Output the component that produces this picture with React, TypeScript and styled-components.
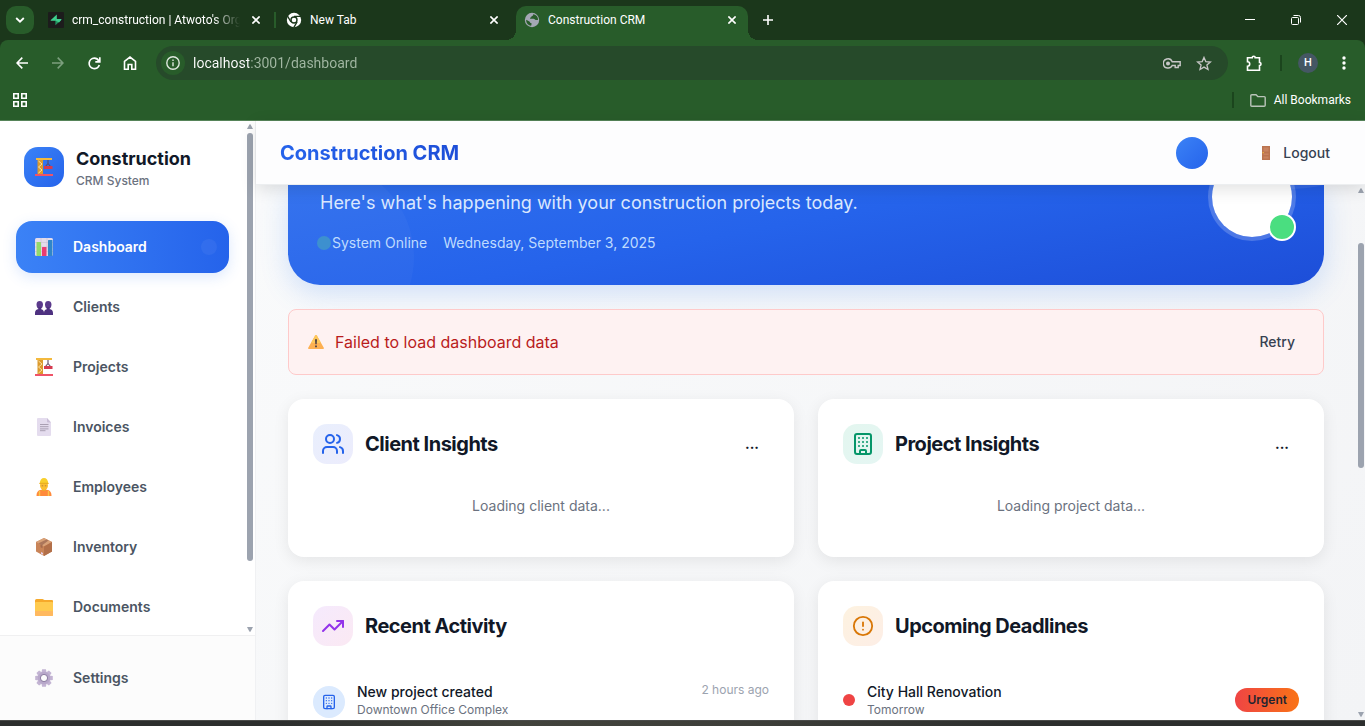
import React from 'react';
import styled, { createGlobalStyle, css } from 'styled-components';
import { Building, CircleAlert, TrendingUp, Users } from 'lucide-react';

const uiFont = `'Inter', 'Liberation Sans', sans-serif`;
const chromeFont = `Roboto, 'Noto Sans', sans-serif`;

const GlobalStyle = createGlobalStyle`
  * { box-sizing: border-box; }
  body { margin: 0; font-family: ${uiFont}; overflow: hidden; }
  button { border: 0; padding: 0; background: none; font: inherit; color: inherit; cursor: pointer; }
  a { color: inherit; text-decoration: none; }
  h1, h2, p, ul { margin: 0; padding: 0; }
  ul { list-style: none; }
  svg { display: block; flex-shrink: 0; }
`;

/* ---------- browser window ---------- */

const Window = styled.div`
  display: flex;
  flex-direction: column;
  height: 100vh;
  background: #fff;
`;

const TabStrip = styled.div`
  display: flex;
  align-items: center;
  height: 40px;
  padding-left: 6px;
  background: #1b371b;
  color: #fff;
  font: 12px/16px ${chromeFont};
`;

const TabSearch = styled.button`
  display: grid;
  place-items: center;
  width: 28px;
  height: 28px;
  margin-right: 6px;
  border-radius: 10px;
  background: #285c2a;
`;

const Tabs = styled.div`
  display: flex;
  align-self: stretch;
  align-items: flex-end;
`;

const Tab = styled.div<{ $active?: boolean }>`
  position: relative;
  display: flex;
  align-items: center;
  gap: 8px;
  width: 232px;
  height: 34px;
  padding: 0 8px 6px;
  border-radius: 10px 10px 0 0;
  ${p =>
    p.$active &&
    css`
      margin-left: 6px;
      background: #285c2a;
      &::before,
      &::after {
        content: '';
        position: absolute;
        bottom: 0;
        width: 10px;
        height: 10px;
      }
      &::before {
        left: -10px;
        background: radial-gradient(circle at 0 0, transparent 10px, #285c2a 10px);
      }
      &::after {
        right: -10px;
        background: radial-gradient(circle at 100% 0, transparent 10px, #285c2a 10px);
      }
    `}
`;

const TabTitle = styled.span<{ $fade?: boolean }>`
  flex: 1;
  min-width: 0;
  overflow: hidden;
  white-space: nowrap;
  ${p => p.$fade && css`mask-image: linear-gradient(to right, #000 84%, transparent);`}
`;

const TabDivider = styled.span`
  width: 2px;
  height: 16px;
  margin: 0 2px 12px;
  background: #285c2a;
`;

const SmallButton = styled.button`
  display: grid;
  place-items: center;
  width: 16px;
  height: 16px;
`;

const NewTabButton = styled(SmallButton)`
  margin-left: 12px;
`;

const WindowControls = styled.div`
  display: flex;
  align-self: stretch;
  margin-left: auto;
`;

const WindowButton = styled.button`
  display: grid;
  place-items: center;
  width: 46px;
`;

const ToolbarArea = styled.div`
  background: #1b371b;
`;

const Toolbar = styled.div`
  display: flex;
  align-items: center;
  height: 46px;
  padding: 0 3px 0 4px;
  border-radius: 8px 8px 0 0;
  background: #285c2a;
  color: #fff;
`;

const ToolButton = styled.button`
  display: grid;
  place-items: center;
  width: 36px;
  height: 34px;
`;

const AddressBar = styled.div`
  display: flex;
  flex: 1;
  align-items: center;
  height: 34px;
  margin: 0 8px;
  padding: 0 8px 0 5px;
  border-radius: 17px;
  background: #264a2a;
  color: #c7c7c7;
`;

const SiteInfo = styled.button`
  display: grid;
  place-items: center;
  width: 24px;
  height: 24px;
  border-radius: 50%;
  background: #285c2a;
`;

const AddressInput = styled.input`
  flex: 1;
  min-width: 0;
  margin-left: 8px;
  padding: 0;
  border: 0;
  outline: 0;
  font: 14px/20px ${chromeFont};
  color: transparent;
  background: linear-gradient(to right, #fff 56px, #a3b8a4 56px);
  background-clip: text;
  -webkit-background-clip: text;
`;

const AddressButton = styled.button`
  display: grid;
  place-items: center;
  width: 32px;
  height: 24px;
`;

const BarDivider = styled.span<{ $space: number }>`
  width: 2px;
  height: 16px;
  margin: 0 ${p => p.$space}px 0 8px;
  background: #1b451d;
`;

const ProfileButton = styled.button`
  width: 20px;
  height: 20px;
  margin-right: 8px;
  border-radius: 50%;
  background: #455764;
  font: 500 11px/20px Roboto, sans-serif;
`;

const BookmarksBar = styled.div`
  display: flex;
  align-items: center;
  height: 35px;
  padding: 0 14px 6px 12px;
  border-bottom: 1px solid #568459;
  background: #285c2a;
  color: #fff;
  font: 12px/16px ${chromeFont};
`;

const BookmarksLink = styled.button`
  display: flex;
  align-items: center;
  gap: 8px;
`;

const Spacer = styled.span`
  flex: 1;
`;

const Taskbar = styled.div`
  height: 6px;
  border-top: 1px solid #4a4b49;
  background: linear-gradient(to right, #2c2e2d 20%, #42433c 38%, #3d3e39 55%, #2c2e2d 75%);
`;

/* ---------- application ---------- */

const AppShell = styled.div`
  display: flex;
  flex: 1;
  min-height: 0;
`;

const Sidebar = styled.aside`
  display: flex;
  flex-direction: column;
  width: 256px;
  flex-shrink: 0;
  border-right: 1px solid #f0f1f3;
  background: #fff;
`;

const SidebarScroll = styled.div`
  display: flex;
  flex: 1;
  min-height: 0;
  overflow: hidden;
`;

const SidebarBody = styled.div`
  flex: 1;
`;

const Brand = styled.div`
  display: flex;
  align-items: center;
  gap: 12px;
  padding: 24px;
`;

const BrandMark = styled.span`
  display: grid;
  place-items: center;
  width: 40px;
  height: 40px;
  border-radius: 14px;
  background: linear-gradient(135deg, #3b82f6, #2563eb);
`;

const BrandName = styled.p`
  font-size: 18px;
  line-height: 28px;
  font-weight: 700;
  color: #111827;
`;

const BrandSub = styled.p`
  font-size: 12px;
  line-height: 16px;
  font-weight: 500;
  color: #6b7280;
`;

const NavList = styled.ul`
  display: flex;
  flex-direction: column;
  gap: 8px;
  padding: 8px 16px;
`;

const NavLink = styled.a<{ $active?: boolean }>`
  display: flex;
  align-items: center;
  gap: 17px;
  height: 52px;
  padding: 0 12px 0 16px;
  border-radius: 16px;
  font-size: 14px;
  line-height: 20px;
  font-weight: 600;
  color: ${p => (p.$active ? '#fff' : '#4b5563')};
  ${p =>
    p.$active &&
    css`
      background: linear-gradient(to right, #3b82f6, #2563eb);
      box-shadow: 0 4px 14px rgba(59, 130, 246, 0.18);
    `}
`;

const NavIcon = styled.span`
  display: grid;
  place-items: center;
  width: 24px;
  height: 24px;
`;

const ActivePulse = styled.span`
  width: 16px;
  height: 16px;
  margin-left: auto;
  border-radius: 50%;
  background: rgba(255, 255, 255, 0.05);
`;

const SidebarFooter = styled.div`
  height: 85px;
  padding: 16px 26px 0 16px;
  border-top: 1px solid #f0f0f1;
  background: #fcfcfc;
`;

const ScrollColumn = styled.div<{ $width: number; $lead: number; $size: number }>`
  display: flex;
  flex-direction: column;
  align-items: center;
  flex-shrink: 0;
  width: ${p => p.$width}px;
  padding: 3px 0;
  color: #9ca3af;
  &::before {
    content: '';
    order: 1;
    width: 6px;
    height: ${p => p.$size}px;
    margin-top: ${p => p.$lead}px;
    border-radius: 3px;
    background: #9ca3af;
  }
  svg:last-child {
    order: 2;
    margin-top: auto;
  }
`;

const Main = styled.div`
  display: flex;
  flex: 1;
  flex-direction: column;
  min-width: 0;
`;

const TopBar = styled.header`
  position: relative;
  z-index: 1;
  display: flex;
  align-items: center;
  height: 64px;
  padding: 0 35px 0 24px;
  border-bottom: 1px solid #eceef0;
  background: #fdfdfe;
  box-shadow: 0 4px 16px rgba(0, 0, 0, 0.12);
`;

const AppTitle = styled.h1`
  margin-right: auto;
  font-size: 20px;
  line-height: 28px;
  font-weight: 700;
  color: transparent;
  background: linear-gradient(to right, #2563eb, #1d4ed8);
  background-clip: text;
  -webkit-background-clip: text;
`;

const UserDot = styled.button`
  width: 32px;
  height: 32px;
  margin-right: 50px;
  border-radius: 50%;
  background: linear-gradient(135deg, #3b82f6, #2563eb);
`;

const LogoutButton = styled.button`
  display: flex;
  align-items: center;
  gap: 9px;
  font-size: 14px;
  line-height: 20px;
  font-weight: 500;
  color: #374151;
`;

const ScrollArea = styled.div`
  display: flex;
  flex: 1;
  min-height: 0;
  overflow: hidden;
  background: linear-gradient(135deg, #f9fafb, #f3f4f6);
`;

const Content = styled.main`
  display: flex;
  flex: 1;
  flex-direction: column;
  gap: 24px;
  min-width: 0;
  padding: 0 33px 0 32px;
`;

const Hero = styled.section`
  position: relative;
  display: flex;
  flex-shrink: 0;
  justify-content: space-between;
  height: 100px;
  border-radius: 0 0 32px 32px;
  background: linear-gradient(170deg, #2f6fee, #2563eb 45%, #1d4ed8);
  box-shadow: 0 8px 28px rgba(59, 130, 246, 0.22);
`;

const HeroShapes = styled.div`
  position: absolute;
  inset: 0;
  overflow: hidden;
  border-radius: inherit;
  &::before,
  &::after {
    content: '';
    position: absolute;
    border-radius: 50%;
    background: rgba(255, 255, 255, 0.03);
  }
  &::before {
    left: -66px;
    bottom: -68px;
    width: 192px;
    height: 192px;
  }
  &::after {
    right: -96px;
    bottom: 96px;
    width: 256px;
    height: 256px;
    background: rgba(255, 255, 255, 0.08);
  }
`;

const HeroText = styled.div`
  position: relative;
  padding: 4px 32px 0;
`;

const HeroLead = styled.p`
  font-size: 18px;
  line-height: 28px;
  font-weight: 400;
  color: #dbe8fe;
`;

const HeroMeta = styled.div`
  display: flex;
  align-items: center;
  gap: 16px;
  margin-top: 16px;
  font-size: 14px;
  line-height: 20px;
  font-weight: 400;
  color: #bfdbfe;
`;

const Status = styled.span`
  position: relative;
  padding-left: 12px;
  &::before {
    content: '';
    position: absolute;
    left: -3px;
    top: 3px;
    width: 14px;
    height: 14px;
    border-radius: 50%;
    background: #3d90cf;
  }
`;

const Avatar = styled.div`
  position: relative;
  width: 88px;
  height: 88px;
  margin: -32px 28px 0 0;
  border: 4px solid rgba(255, 255, 255, 0.2);
  border-radius: 50%;
  background: #fff;
  background-clip: padding-box;
  &::after {
    content: '';
    position: absolute;
    right: -4px;
    bottom: -4px;
    width: 24px;
    height: 24px;
    border: 2px solid #fff;
    border-radius: 50%;
    background: #4ade80;
    transform: translateX(0);
  }
`;

const ErrorBanner = styled.section`
  position: relative;
  display: flex;
  flex-shrink: 0;
  align-items: center;
  gap: 11px;
  height: 66px;
  padding: 0 28px 0 19px;
  border: 1px solid #fecaca;
  border-radius: 8px;
  background: #fef2f2;
`;

const ErrorText = styled.p`
  flex: 1;
  font-size: 16px;
  line-height: 24px;
  color: #b91c1c;
`;

const RetryButton = styled.button`
  font-size: 14px;
  line-height: 20px;
  font-weight: 500;
  color: #374151;
`;

const CardGrid = styled.div`
  display: grid;
  grid-template-columns: 1fr 1fr;
  gap: 24px;
`;

const Card = styled.section`
  min-height: 158px;
  padding: 25px;
  border-radius: 16px;
  background: #fff;
  box-shadow: 0 4px 16px rgba(0, 0, 0, 0.08);
`;

const CardHeader = styled.div`
  display: flex;
  align-items: center;
  gap: 12px;
`;

const CardIcon = styled.span<{ $from: string; $to: string; $color: string }>`
  display: grid;
  place-items: center;
  width: 40px;
  height: 40px;
  border-radius: 14px;
  background: linear-gradient(135deg, ${p => p.$from}, ${p => p.$to});
  color: ${p => p.$color};
`;

const CardTitle = styled.h2`
  flex: 1;
  font-size: 20px;
  line-height: 28px;
  font-weight: 700;
  letter-spacing: -0.025em;
  color: #111827;
`;

const MoreButton = styled.button`
  padding: 6px 10px;
  font-size: 14px;
  line-height: 20px;
  font-weight: 700;
  color: #111827;
`;

const Loading = styled.p`
  padding: 32px 0 16px;
  font-size: 14px;
  line-height: 20px;
  text-align: center;
  color: #6b7280;
`;

const Entry = styled.div`
  display: flex;
  align-items: center;
  gap: 12px;
  margin-top: 36px;
`;

const EntryIcon = styled.span`
  display: grid;
  place-items: center;
  align-self: flex-end;
  width: 32px;
  height: 32px;
  border-radius: 50%;
  background: #dbeafe;
  color: #2563eb;
`;

const EntryText = styled.div`
  flex: 1;
`;

const EntryTitle = styled.p`
  font-size: 14px;
  line-height: 20px;
  font-weight: 500;
  color: #111827;
`;

const EntryNote = styled.p`
  font-size: 12px;
  line-height: 16px;
  color: #6b7280;
`;

const EntryTime = styled.time`
  align-self: flex-start;
  font-size: 12px;
  line-height: 16px;
  color: #9ca3af;
`;

const DueDot = styled.span`
  width: 12px;
  height: 12px;
  border-radius: 50%;
  background: #ef4444;
`;

const Badge = styled.span`
  padding: 4px 12px;
  border-radius: 12px;
  background: linear-gradient(to right, #ef4444, #f97316);
  font-size: 12px;
  line-height: 16px;
  font-weight: 600;
  color: #1f2430;
`;

/* ---------- drawings ---------- */

const CloseGlyph = () => (
  <svg width="8" height="8" viewBox="0 0 8 8" stroke="currentColor" strokeWidth="1.6">
    <path d="M.4.4l7.200 7.200M7.600.4L.4 7.600" />
  </svg>
);

const SupabaseIcon = () => (
  <svg width="16" height="16" viewBox="0 0 16 16">
    <rect width="16" height="16" rx="1" fill="#1c1c1c" />
    <path d="M8.8 2.6v6.2H3.2c-.5 0-.7-.5-.4-.9z" fill="#3ecf8e" />
    <path d="M7.4 13.2V7h5.4c.5 0 .7.5.4.9z" fill="#249361" />
    <path d="M7.4 7h5.4c.5 0 .7.5.4.9L11 10.4 7.4 8.6z" fill="#3ecf8e" />
  </svg>
);

const ChromeIcon = () => (
  <svg width="16" height="16" viewBox="0 0 16 16">
    <circle cx="8" cy="8" r="7.2" fill="#fff" />
    <circle cx="8" cy="8" r="3" fill="none" stroke="#1b371b" strokeWidth="1.4" />
    <path d="M8 4.4h7M4.9 9.8L1.4 3.9M11.1 9.8l-3.4 5.8" stroke="#1b371b" strokeWidth="1.3" />
  </svg>
);

const GlobeIcon = () => (
  <svg width="16" height="16" viewBox="0 0 16 16">
    <circle cx="8" cy="8" r="7.200" fill="#a4a7b4" />
    <path
      d="M9.200 2c.4 1-.2 1.600-1.200 2-.8.3-.4 1.200-1.300 1.500-.9.200-.9 1-.2 1.300h3c1.100 0 1.300 1.200 2.300 1.200H14c.3-2.600-1.400-5.100-4.800-6zM2.200 7.800l3.200 1.600c1 .5.5 1.500 1.500 1.600.9.100.7 1 .5 1.700l-.3 1.100C4 13.300 2 11 2.200 7.800z"
      fill="#285c2a"
    />
  </svg>
);

const CraneEmoji = () => (
  <svg width="18" height="18" viewBox="0 0 18 18">
    <rect x="0" y="16" width="18" height="2" fill="#ef5368" />
    <rect x="2.500" y="1" width="5.500" height="15" fill="#dc9a2e" />
    <path d="M3.500 3l3.500 3-3.500 3 3.500 3-3.500 3" fill="none" stroke="#fbe3a0" />
    <rect x="1" y="0" width="16" height="2" fill="#f3b93d" />
    <path d="M13 2v4M10 9l3-3.500L16 9" fill="none" stroke="#5b4a68" strokeWidth="1.100" />
    <rect x="9" y="8" width="8.500" height="3" fill="#d63b50" />
  </svg>
);

const ChartEmoji = () => (
  <svg width="18" height="18" viewBox="0 0 18 18">
    <rect width="18" height="18" rx="1.500" fill="#e3dcea" />
    <path d="M0 4.500h18M0 9h18M0 13.500h18M6 0v18M12 0v18" stroke="#c9bfd4" strokeWidth=".6" />
    <rect x="1.500" y="4" width="4.500" height="14" rx=".5" fill="#93d96b" />
    <rect x="7" y="9" width="4.500" height="9" rx=".5" fill="#ea3b71" />
    <rect x="13" y="2" width="4.500" height="16" rx=".5" fill="#2f86c9" />
  </svg>
);

const PeopleEmoji = () => (
  <svg width="18" height="18" viewBox="0 -3 18 18" fill="#5b3a8c">
    <path d="M1.500 3.500C1.500 1 2.800 0 4.700 0s3.300 1 3.300 3.500S6.800 8 4.700 8 1.500 6 1.500 3.500zM10 3.500C10 1 11.300 0 13.200 0s3.300 1 3.300 3.500S15.300 8 13.200 8 10 6 10 3.500z" />
    <path d="M0 14v-2c0-2.500 1.500-4 4.600-4S9 9.500 9 12v2z" fill="#4e3180" />
    <path d="M9 14v-2c0-2.500 1.300-4 4.400-4S18 9.500 18 12v2z" fill="#4e3180" />
    <path d="M3.500 6h2.500v3H3.500zM12 6h2.500v3H12z" fill="#4e3180" />
  </svg>
);

const PageEmoji = () => (
  <svg width="14" height="18" viewBox="0 0 14 18">
    <path d="M0 1a1 1 0 011-1h9l4 4.500V17a1 1 0 01-1 1H1a1 1 0 01-1-1z" fill="#e4dcee" />
    <path d="M10 0l4 4.500h-3a1 1 0 01-1-1z" fill="#c9bdd6" />
    <path d="M3 6.500h8.500M3 8.700h8.500M3 10.900h8.500M3 12.700h5.500" stroke="#a99fb2" />
  </svg>
);

const WorkerEmoji = () => (
  <svg width="16" height="18" viewBox="0 0 16 18">
    <path d="M.5 18c0-4.500 2-6.500 7.500-6.500s7.500 2 7.500 6.500z" fill="#ff8a3c" />
    <path d="M3.500 13v5M12.500 13v5" stroke="#f9c64a" strokeWidth="1.400" />
    <rect x="6" y="9" width="4" height="4" fill="#eea42e" />
    <ellipse cx="8" cy="7.500" rx="4" ry="4.500" fill="#fbbf30" />
    <path d="M3.800 5.500C3.800 2 5.500 0 8 0s4.200 2 4.200 5.500z" fill="#f8cf2c" />
    <rect x="3.300" y="4.800" width="9.400" height="1.300" rx=".6" fill="#eab021" />
    <path d="M5.700 7.800h1.500M8.800 7.800h1.500" stroke="#a8713a" strokeWidth=".8" />
  </svg>
);

const BoxEmoji = () => (
  <svg width="16" height="18" viewBox="0 0 16 18">
    <path d="M8 0l8 4v9.500L8 18l-8-4.500V4z" fill="#c98458" />
    <path d="M8 0l8 4-8 4.500L0 4z" fill="#d8a178" />
    <path d="M8 8.500L16 4v9.500L8 18z" fill="#b26f49" />
    <path d="M3.500 2.500L5.500 1.500l8 3.800-2 1.200v2.800l-2 1V7z" fill="#8d5a48" opacity=".6" transform="matrix(-1 0 0 1 16 0)" />
    <path d="M5 14l2 1v1.800l-2-1.100z" fill="#e8d2ee" />
  </svg>
);

const FolderEmoji = () => (
  <svg width="18" height="17" viewBox="0 0 18 17">
    <path d="M0 1.500A1.500 1.500 0 011.500 0h6L9.500 1H17a1 1 0 011 1v12H0z" fill="#f6a92b" />
    <rect y="3" width="18" height="14" rx="1" fill="#ffcb4f" />
    <path d="M0 12h18v4a1 1 0 01-1 1H1a1 1 0 01-1-1z" fill="#ffb95f" />
  </svg>
);

const GearEmoji = () => (
  <svg width="18" height="18" viewBox="-9 -9 18 18">
    {[0, 45, 90, 135, 180, 225, 270, 315].map(a => (
      <path key={a} d="M-1.900-8.800h3.800l.7 3.800h-5.200z" fill="#c3b4d3" transform={`rotate(${a})`} />
    ))}
    <circle r="4.700" fill="none" stroke="#b8a8ca" strokeWidth="3" />
    <circle r="3.600" fill="none" stroke="#8f80a3" strokeWidth="1" />
  </svg>
);

const WarningEmoji = () => (
  <svg width="16" height="14" viewBox="0 0 16 14">
    <path d="M7.200.6c.4-.7 1.200-.7 1.600 0l7 12.200c.3.600 0 1.200-.7 1.200H.9c-.7 0-1-.6-.7-1.200z" fill="#fdb052" />
    <path d="M7.200.6c.4-.7 1.200-.7 1.600 0L13 8H3z" fill="#fdc75a" />
    <path d="M7 4.200h2l-.3 5H7.300zM7.100 10.500h1.800v1.800H7.100z" fill="#4e4044" />
  </svg>
);

const DoorEmoji = () => (
  <svg width="16" height="14" viewBox="0 0 16 14">
    <rect x="4" width="8" height="14" fill="#bb7450" />
    <path d="M5.500 1.500h5v4h-5zM5.500 7.500h5v1.500h-5zM5.500 10.500h5v2h-5z" fill="#c98360" />
    <path d="M4.500 6.700h1.500" stroke="#f3b93d" />
  </svg>
);

const ScrollArrow = ({ down = false }: { down?: boolean }) => (
  <svg width="6" height="5" viewBox="0 0 6 5" fill="currentColor">
    <path d={down ? 'M0 0h6L3.600 4.500q-.6.700-1.200 0z' : 'M0 5h6L3.600.5q-.6-.7-1.200 0z'} />
  </svg>
);

const navItems = [
  { label: 'Dashboard', icon: <ChartEmoji />, active: true },
  { label: 'Clients', icon: <PeopleEmoji /> },
  { label: 'Projects', icon: <CraneEmoji /> },
  { label: 'Invoices', icon: <PageEmoji /> },
  { label: 'Employees', icon: <WorkerEmoji /> },
  { label: 'Inventory', icon: <BoxEmoji /> },
  { label: 'Documents', icon: <FolderEmoji /> },
];

const BrowserChrome = () => (
  <>
    <TabStrip>
      <TabSearch aria-label="Search tabs">
        <svg width="10" height="6" viewBox="0 0 10 6" fill="none" stroke="#fff" strokeWidth="1.800">
          <path d="M1.200 1L5 4.700 8.800 1" />
        </svg>
      </TabSearch>
      <Tabs>
        <Tab>
          <SupabaseIcon />
          <TabTitle $fade>crm_construction | Atwoto's Org</TabTitle>
          <SmallButton aria-label="Close tab"><CloseGlyph /></SmallButton>
        </Tab>
        <TabDivider />
        <Tab>
          <ChromeIcon />
          <TabTitle>New Tab</TabTitle>
          <SmallButton aria-label="Close tab"><CloseGlyph /></SmallButton>
        </Tab>
        <Tab $active>
          <GlobeIcon />
          <TabTitle>Construction CRM</TabTitle>
          <SmallButton aria-label="Close tab"><CloseGlyph /></SmallButton>
        </Tab>
      </Tabs>
      <NewTabButton aria-label="New tab">
        <svg width="10" height="10" viewBox="0 0 10 10" stroke="#fff" strokeWidth="1.600">
          <path d="M5 0v10M0 5h10" />
        </svg>
      </NewTabButton>
      <WindowControls>
        <WindowButton aria-label="Minimize">
          <svg width="10" height="10" viewBox="0 0 10 10" stroke="#fff"><path d="M0 4.500h10" /></svg>
        </WindowButton>
        <WindowButton aria-label="Restore">
          <svg width="10" height="10" viewBox="0 0 10 10" fill="none" stroke="#fff">
            <rect x=".5" y="2.500" width="7" height="7" rx="1" />
            <path d="M2.500.5h5a2 2 0 012 2v5" />
          </svg>
        </WindowButton>
        <WindowButton aria-label="Close">
          <svg width="10" height="10" viewBox="0 0 10 10" stroke="#fff" strokeWidth="1.200">
            <path d="M0 0l10 10M10 0L0 10" />
          </svg>
        </WindowButton>
      </WindowControls>
    </TabStrip>
    <ToolbarArea>
      <Toolbar>
        <ToolButton aria-label="Back">
          <svg width="12" height="12" viewBox="0 0 12 12" fill="none" stroke="#fff" strokeWidth="1.600">
            <path d="M12 6H1M6.300.6L1 6l5.300 5.400" />
          </svg>
        </ToolButton>
        <ToolButton aria-label="Forward" disabled>
          <svg width="12" height="12" viewBox="0 0 12 12" fill="none" stroke="#7c9f7e" strokeWidth="1.600">
            <path d="M0 6h11M5.700.6L11 6l-5.300 5.400" />
          </svg>
        </ToolButton>
        <ToolButton aria-label="Reload">
          <svg width="13" height="13" viewBox="0 0 13 13" fill="none" stroke="#fff" strokeWidth="1.700">
            <path d="M11.300 8A5.200 5.200 0 116.300 1.200c2 0 3.700 1.100 4.600 3" />
            <path d="M11.800.3v4.500H7.300" />
          </svg>
        </ToolButton>
        <ToolButton aria-label="Home">
          <svg width="14" height="14" viewBox="0 0 14 14" fill="none" stroke="#fff" strokeWidth="1.600">
            <path d="M1.500 5.300L7 1l5.500 4.300v7.900H8.800V8.500H5.200v4.700H1.500z" />
          </svg>
        </ToolButton>
        <AddressBar>
          <SiteInfo aria-label="View site information">
            <svg width="14" height="14" viewBox="0 0 14 14" fill="none" stroke="#dfe8df" strokeWidth="1.400">
              <circle cx="7" cy="7" r="6.200" />
              <path d="M7 6.200v4M7 3.500v1.500" />
            </svg>
          </SiteInfo>
          <AddressInput aria-label="Address" defaultValue="localhost:3001/dashboard" spellCheck={false} />
          <AddressButton aria-label="Saved passwords">
            <svg width="18" height="11" viewBox="0 0 18 11" fill="none" stroke="currentColor" strokeWidth="1.400">
              <path d="M9.200 3.700A4.600 4.600 0 105.300 10c1.800 0 3.200-1 3.900-2.500h3v2h3v-2h2V3.700z" />
              <circle cx="5" cy="5.500" r="1.300" fill="currentColor" />
            </svg>
          </AddressButton>
          <AddressButton aria-label="Bookmark this page">
            <svg width="16" height="15" viewBox="0 0 16 15" fill="none" stroke="currentColor" strokeWidth="1.300">
              <path d="M8 1.400l1.800 4.200 4.600.4-3.500 3 1.100 4.500L8 11.100l-4 2.400L5.100 9 1.600 6l4.600-.4z" />
            </svg>
          </AddressButton>
        </AddressBar>
        <ToolButton aria-label="Extensions">
          <svg width="17" height="17" viewBox="0 0 17 17" fill="none" stroke="#fff" strokeWidth="1.600">
            <path d="M1.500 2.800h4.700a1.500 1.500 0 013 0h4.300v4.700a1.500 1.500 0 010 3v4.700h-12v-4a2.200 2.200 0 000-4.400z" />
          </svg>
        </ToolButton>
        <BarDivider $space={16} />
        <ProfileButton aria-label="Profile">H</ProfileButton>
        <ToolButton aria-label="Menu">
          <svg width="4" height="14" viewBox="0 0 4 14" fill="#fff">
            <circle cx="2" cy="2" r="1.700" /><circle cx="2" cy="7" r="1.700" /><circle cx="2" cy="12" r="1.700" />
          </svg>
        </ToolButton>
      </Toolbar>
    </ToolbarArea>
    <BookmarksBar>
      <SmallButton aria-label="Apps">
        <svg width="14" height="14" viewBox="0 0 14 14" fill="none" stroke="#fff" strokeWidth="1.600">
          <path d="M.8.8h4.400v4.400H.8zM8.800.8h4.400v4.400H8.800zM.8 8.800h4.400v4.400H.8zM8.800 8.800h4.400v4.400H8.800z" />
        </svg>
      </SmallButton>
      <Spacer />
      <BarDivider $space={16} />
      <BookmarksLink>
        <svg width="16" height="13" viewBox="0 0 16 13" fill="none" stroke="#b9c4b9" strokeWidth="1.400">
          <path d="M.8 11.200V1.800q0-1 1-1H6l1.800 1.800h6.400q1 0 1 1v7.600q0 1-1 1H1.800q-1 0-1-1z" />
        </svg>
        All Bookmarks
      </BookmarksLink>
    </BookmarksBar>
  </>
);

export default function App() {
  return (
    <Window>
      <GlobalStyle />
      <BrowserChrome />
      <AppShell>
        <Sidebar>
          <SidebarScroll>
            <SidebarBody>
              <Brand>
                <BrandMark><CraneEmoji /></BrandMark>
                <div>
                  <BrandName>Construction</BrandName>
                  <BrandSub>CRM System</BrandSub>
                </div>
              </Brand>
              <nav>
                <NavList>
                  {navItems.map(item => (
                    <li key={item.label}>
                      <NavLink href="#" $active={item.active}>
                        <NavIcon>{item.icon}</NavIcon>
                        {item.label}
                        {item.active && <ActivePulse />}
                      </NavLink>
                    </li>
                  ))}
                </NavList>
              </nav>
            </SidebarBody>
            <ScrollColumn $width={10} $lead={4} $size={428}>
              <ScrollArrow />
              <ScrollArrow down />
            </ScrollColumn>
          </SidebarScroll>
          <SidebarFooter>
            <NavLink href="#">
              <NavIcon><GearEmoji /></NavIcon>
              Settings
            </NavLink>
          </SidebarFooter>
        </Sidebar>
        <Main>
          <TopBar>
            <AppTitle>Construction CRM</AppTitle>
            <UserDot aria-label="Account" />
            <LogoutButton><DoorEmoji />Logout</LogoutButton>
          </TopBar>
          <ScrollArea>
            <Content>
              <Hero>
                <HeroShapes />
                <HeroText>
                  <HeroLead>Here's what's happening with your construction projects today.</HeroLead>
                  <HeroMeta>
                    <Status>System Online</Status>
                    <span>Wednesday, September 3, 2025</span>
                  </HeroMeta>
                </HeroText>
                <Avatar />
              </Hero>
              <ErrorBanner role="alert">
                <WarningEmoji />
                <ErrorText>Failed to load dashboard data</ErrorText>
                <RetryButton>Retry</RetryButton>
              </ErrorBanner>
              <CardGrid>
                <Card>
                  <CardHeader>
                    <CardIcon $from="#e9effd" $to="#ececfc" $color="#2563eb"><Users /></CardIcon>
                    <CardTitle>Client Insights</CardTitle>
                    <MoreButton aria-label="Client options">...</MoreButton>
                  </CardHeader>
                  <Loading>Loading client data...</Loading>
                </Card>
                <Card>
                  <CardHeader>
                    <CardIcon $from="#e3f6ef" $to="#e5f6f3" $color="#059669"><Building /></CardIcon>
                    <CardTitle>Project Insights</CardTitle>
                    <MoreButton aria-label="Project options">...</MoreButton>
                  </CardHeader>
                  <Loading>Loading project data...</Loading>
                </Card>
                <Card>
                  <CardHeader>
                    <CardIcon $from="#f5eafd" $to="#fbe9f3" $color="#9333ea"><TrendingUp /></CardIcon>
                    <CardTitle>Recent Activity</CardTitle>
                  </CardHeader>
                  <Entry>
                    <EntryIcon><Building size={16} /></EntryIcon>
                    <EntryText>
                      <EntryTitle>New project created</EntryTitle>
                      <EntryNote>Downtown Office Complex</EntryNote>
                    </EntryText>
                    <EntryTime>2 hours ago</EntryTime>
                  </Entry>
                </Card>
                <Card>
                  <CardHeader>
                    <CardIcon $from="#fdf2e0" $to="#fdeee6" $color="#d97706"><CircleAlert size={22} /></CardIcon>
                    <CardTitle>Upcoming Deadlines</CardTitle>
                  </CardHeader>
                  <Entry>
                    <DueDot />
                    <EntryText>
                      <EntryTitle>City Hall Renovation</EntryTitle>
                      <EntryNote>Tomorrow</EntryNote>
                    </EntryText>
                    <Badge>Urgent</Badge>
                  </Entry>
                </Card>
              </CardGrid>
            </Content>
            <ScrollColumn $width={8} $lead={50} $size={225}>
              <ScrollArrow />
              <ScrollArrow down />
            </ScrollColumn>
          </ScrollArea>
        </Main>
      </AppShell>
      <Taskbar />
    </Window>
  );
}
